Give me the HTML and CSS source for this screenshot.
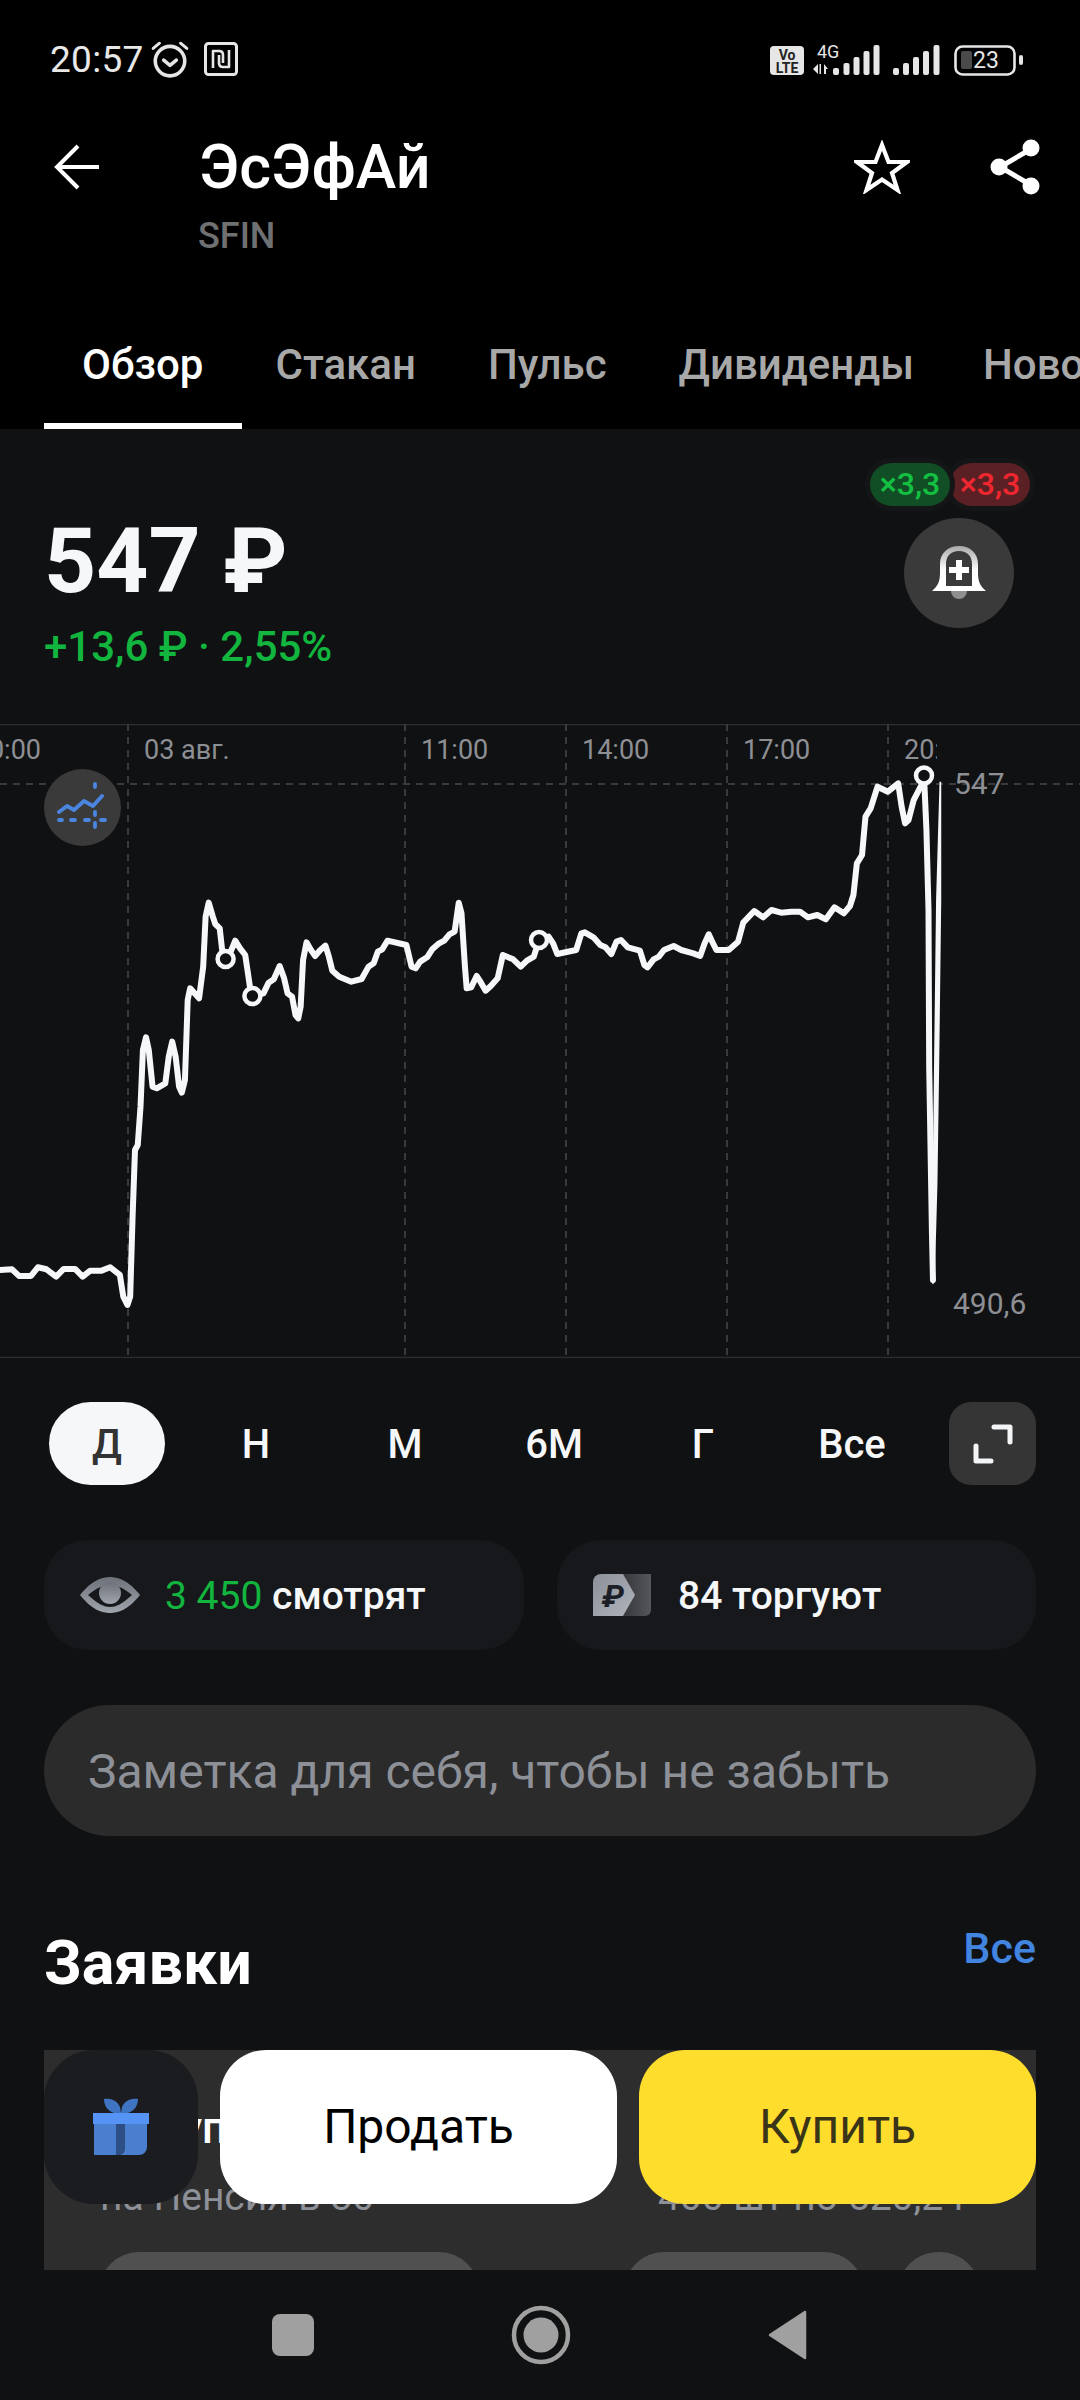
FILE: index.html
```html
<!DOCTYPE html>
<html lang="ru">
<head>
<meta charset="utf-8">
<title>ЭсЭфАй</title>
<link rel="stylesheet" href="styles.css">
</head>
<body>
<div class="screen">
  <header class="header">
    <div class="status">
      <div class="status-left">
        <span class="clock">20:57</span>
        <svg class="ic-alarm" width="40" height="40" viewBox="0 0 38 38" fill="none" stroke="#e6e6e6" stroke-linecap="round"><circle cx="19" cy="21" r="14" stroke-width="3.4"/><path d="M13 20l6 5 6-5" stroke-width="3.4" stroke-linejoin="round"/><path d="M3 9l6-5M35 9l-6-5" stroke-width="2.8"/></svg>
        <svg class="ic-nfc" width="34" height="34" viewBox="0 0 34 34" fill="none" stroke="#e6e6e6" stroke-linejoin="round"><rect x="1.5" y="1.5" width="31" height="31" rx="3" stroke-width="3"/><path d="M9 26V9h6c3 0 4 2 4 4v8" stroke-width="2.6"/><path d="M25 8v17h-6c-3 0-4-2-4-4v-8" stroke-width="2.6"/></svg>
      </div>
      <svg class="status-right" width="255" height="36" viewBox="770 40 255 36">
        <rect x="770" y="45" width="34" height="29" rx="4" fill="#e6e6e6"/>
        <text class="lte" x="787" y="58.500" text-anchor="middle">Vo</text>
        <text class="lte" x="787" y="71.500" text-anchor="middle">LTE</text>
        <text class="sig-text" x="817" y="57">4G</text>
        <path d="M818 63v10l-5-5zM821 63v10h-1.500v-10zM824 63l4 5h-2v5h-2z" fill="#e6e6e6"/>
        <g fill="#e6e6e6">
          <rect x="833" y="67" width="6" height="7" rx="2"/><rect x="843.500" y="62" width="6" height="12" rx="2"/><rect x="853.500" y="56" width="6" height="18" rx="2"/><rect x="863.500" y="50" width="6" height="24" rx="2"/><rect x="873.500" y="44" width="6" height="30" rx="2"/>
          <rect x="893" y="67" width="6" height="7" rx="2"/><rect x="903" y="62" width="6" height="12" rx="2"/><rect x="913" y="56" width="6" height="18" rx="2"/><rect x="923" y="50" width="6" height="24" rx="2"/><rect x="933.500" y="44" width="6" height="30" rx="2"/>
        </g>
        <rect x="955.500" y="45.500" width="59" height="28" rx="7" fill="none" stroke="#e6e6e6" stroke-width="2.600"/>
        <rect x="961" y="50" width="11" height="18" rx="2" fill="#4a4a4a"/>
        <text class="batt" x="973" y="67">23</text>
        <rect x="1019" y="54" width="4" height="10" rx="2" fill="#e6e6e6"/>
      </svg>
    </div>
    <div class="titlebar">
      <svg class="ic-back" width="46" height="46" viewBox="0 0 46 46" fill="none" stroke="#fff" stroke-width="4"><path d="M45 23H3M24 2L3 23l21 21"/></svg>
      <h1 class="title">ЭсЭфАй</h1>
      <svg class="ic-star" width="56" height="54" viewBox="0 0 56 54" fill="none" stroke="#fff" stroke-width="4.200"><path d="M28 5l6.500 17H53L38 33l5.500 17L28 39.500 12.500 50 18 33 3 22h18.500z"/></svg>
      <svg class="ic-share" width="52" height="58" viewBox="0 0 52 58" fill="#fff" stroke="#fff"><path d="M41 11L10 29l31 18" fill="none" stroke-width="5"/><circle cx="41" cy="10" r="8.500" stroke="none"/><circle cx="9" cy="29" r="8.500" stroke="none"/><circle cx="41" cy="48" r="8.500" stroke="none"/></svg>
    </div>
    <div class="ticker">SFIN</div>
    <nav class="tabs">
      <span class="tab tab-active">Обзор</span>
      <span class="tab">Стакан</span>
      <span class="tab">Пульс</span>
      <span class="tab">Дивиденды</span>
      <span class="tab tab-last">Новости</span>
    </nav>
  </header>

  <main class="main">
    <section class="quote">
      <div class="quote-left">
        <div class="price">547 ₽</div>
        <div class="change">+13,6 ₽ · 2,55%</div>
      </div>
      <div class="quote-right">
        <div class="badges">
          <span class="badge badge-red">×3,3</span>
          <span class="badge badge-green">×3,3</span>
        </div>
        <button class="bell">
          <svg width="56" height="56" viewBox="0 0 56 56">
            <defs><linearGradient id="bellGrad" x1="0" y1="0" x2="0" y2="1"><stop offset="0" stop-color="#a9a9a9"/><stop offset=".55" stop-color="#fff"/></linearGradient></defs>
            <path d="M20 46h16a8 8 0 0 1-16 0z" fill="#8f8f8f"/>
            <path d="M1 46c6-5 8-10 8-18V19C9 8 17 1 28 1s19 7 19 18v9c0 8 2 13 8 18zM15 41h26V19c0-8-5-13-13-13S15 11 15 19z" fill="url(#bellGrad)" fill-rule="evenodd"/>
            <path d="M25 15h6v7h7v6h-7v7h-6v-7h-7v-6h7z" fill="#fff"/>
          </svg>
        </button>
      </div>
    </section>

    <section class="chart">
      <svg class="chart-svg" width="1080" height="634" viewBox="0 724 1080 634">
        <defs><clipPath id="lastLabel"><rect x="890" y="724" width="47" height="50"/></clipPath></defs>
        <path class="rule" d="M0 724.500H1080M0 1357.500H1080"/>
        <path class="grid" d="M0 784H1080M128 724V1357M405 724V1357M566 724V1357M727 724V1357M888 724V1357"/>
        <text class="axis" x="41" y="759" text-anchor="end">20:00</text>
        <text class="axis" x="144" y="759">03 авг.</text>
        <text class="axis" x="421" y="759">11:00</text>
        <text class="axis" x="582" y="759">14:00</text>
        <text class="axis" x="743" y="759">17:00</text>
        <text class="axis" x="904" y="759" clip-path="url(#lastLabel)">20:00</text>
        <text class="axis-price" x="954" y="794">547</text>
        <text class="axis-price" x="953" y="1314">490,6</text>
        <g transform="translate(0 900) scale(.3444 .3333)">
          <path class="line" d="M0 1110L35 1108 55 1128 90 1128 110 1102 135 1108 163 1130 185 1107 218 1107 240 1130 262 1112 295 1112 320 1102 348 1125 358 1190 370 1215 378 1190 385 950 392 750 400 735 408 620 415 450 424 412 432 450 443 560 455 565 480 550 490 470 500 425 510 470 520 560 528 578 537 540 545 300 552 265 578 295 590 200 597 50 606 8 618 50 625 72 638 85 645 150 655 177 672 150 683 122 697 145 712 165 720 220 727 270 733 288 765 280 780 248 795 238 812 198 825 235 835 280 848 290 858 345 866 355 873 320 880 180 890 127 903 150 915 168 930 150 945 137 955 170 965 212 985 230 1020 245 1050 237 1070 200 1085 190 1097 155 1110 148 1125 122 1180 135 1195 200 1207 205 1220 185 1240 172 1255 148 1275 130 1290 122 1305 103 1320 95 1332 8 1340 40 1350 200 1355 265 1368 262 1384 228 1395 245 1410 272 1425 258 1445 235 1460 165 1490 178 1512 200 1530 182 1550 170 1565 120 1593 110 1606 130 1618 162 1673 150 1688 100 1698 97 1723 112 1743 135 1758 142 1775 162 1790 125 1803 120 1823 142 1858 152 1871 195 1880 202 1898 178 1913 170 1928 150 1956 138 1978 150 2013 160 2033 168 2046 130 2058 103 2068 125 2080 150 2116 150 2143 125 2158 68 2190 33 2216 52 2240 30 2268 38 2298 35 2323 35 2346 52 2373 45 2398 58 2423 22 2450 40 2468 18 2478 -15 2488 -110 2503 -135 2513 -250 2528 -275 2548 -340 2578 -325 2608 -350 2618 -280 2628 -230 2638 -240 2653 -300 2678 -350 2683 -373"/>
          <path class="line" d="M2683 -373L2690 -210 2696 30 2698 500 2706 1000 2709 1140"/>
          <path class="spike" d="M2728 -355L2733 -355 2733 0 2727 500 2722 850 2718 1000 2714 1140Q2709 1165 2704 1140L2700 1000 2708 850 2712 500 2718 0z"/>
        </g>
        <circle class="dot" cx="225.600" cy="959" r="8"/>
        <circle class="dot" cx="252.400" cy="996" r="8"/>
        <circle class="dot" cx="539" cy="940" r="8"/>
        <circle class="dot" cx="924" cy="775.500" r="8"/>
      </svg>
      <button class="indicator">
        <svg width="52" height="52" viewBox="0 0 52 52" fill="none" stroke="#4a86e0" stroke-linecap="round">
          <path d="M2 30l8-6 7 4 10-9 9 5 9-10" stroke-width="3.800" stroke-linejoin="round"/>
          <path d="M38 2v3M38 30v3M38 41v4M2 38h3M14 38h4M28 38h4M44 38h4" stroke-width="3.800"/>
        </svg>
      </button>
    </section>

    <div class="ranges">
      <span class="range range-active">Д</span>
      <span class="range">Н</span>
      <span class="range">М</span>
      <span class="range">6М</span>
      <span class="range">Г</span>
      <span class="range">Все</span>
      <button class="expand">
        <svg width="42" height="42" viewBox="0 0 42 42" fill="none" stroke="#f4f5f6" stroke-width="5" stroke-linecap="round" stroke-linejoin="round"><path d="M22 4h16v15M4 23v15h15"/></svg>
      </button>
    </div>

    <div class="stats">
      <div class="stat">
        <svg class="stat-ic" width="60" height="36" viewBox="0 0 60 36">
          <defs><linearGradient id="eyeGrad" x1="0" y1="0" x2="0" y2="1"><stop offset="0" stop-color="#6d727a"/><stop offset="1" stop-color="#a0a5ad"/></linearGradient></defs>
          <path d="M0 18C12 3 22 0 30 0s18 3 30 18C48 33 38 36 30 36S12 33 0 18z" fill="url(#eyeGrad)"/>
          <path d="M8 18C18 10 24 8 30 8s12 2 22 10C42 27 36 30 30 30S18 27 8 18z" fill="#17181b"/>
          <circle cx="30" cy="16" r="11" fill="url(#eyeGrad)"/>
        </svg>
        <span class="stat-text"><span class="stat-num">3 450</span> смотрят</span>
      </div>
      <div class="stat">
        <svg class="stat-ic stat-ic-wide" width="58" height="42" viewBox="0 0 58 42">
          <defs><linearGradient id="tagGrad" x1="0" y1="0" x2="1" y2="1"><stop offset="0" stop-color="#8b9099"/><stop offset="1" stop-color="#b0b4bb"/></linearGradient><linearGradient id="tagBack" x1="0" y1="0" x2="1" y2="0"><stop offset="0" stop-color="#2c2d30"/><stop offset="1" stop-color="#55565a"/></linearGradient></defs>
          <path d="M20 0h38v36a6 6 0 0 1-6 6H20z" fill="url(#tagBack)"/>
          <path d="M8 0h22l12 21-12 21H0V8a8 8 0 0 1 8-8z" fill="url(#tagGrad)"/>
          <text class="tag-rub" x="20" y="33" text-anchor="middle">₽</text>
        </svg>
        <span class="stat-text">84 торгуют</span>
      </div>
    </div>

    <div class="note">Заметка для себя, чтобы не забыть</div>

    <div class="section-head">
      <h2 class="section-title">Заявки</h2>
      <a class="section-link">Все</a>
    </div>

    <section class="order">
      <div class="order-title">Покупка</div>
      <div class="order-row">
        <span>на Пенсия в 80</span>
        <span>400 шт по 520,24</span>
      </div>
      <div class="order-actions">
        <span class="order-btn order-btn-a"></span>
        <span class="order-btn order-btn-b"></span>
        <span class="order-btn order-btn-c"></span>
      </div>
    </section>

    <div class="actions">
      <button class="gift">
        <svg width="58" height="58" viewBox="0 0 58 58">
          <path d="M12 1c6-1 13 1 16 8l1 6H22C16 13 12 8 12 1zM46 1c-6-1-13 1-16 8l-1 6h7C42 13 46 8 46 1z" fill="#3f74c2"/>
          <rect x="1" y="15" width="56" height="11" fill="#5594f5"/>
          <path d="M2 26h53v23a8 8 0 0 1-8 8H2z" fill="#4a7fd0"/>
          <path d="M24 26h9v25a6 6 0 0 1-6 6h-3z" fill="#2d4f86"/>
        </svg>
      </button>
      <button class="trade trade-sell">Продать</button>
      <button class="trade trade-buy">Купить</button>
    </div>
  </main>

  <footer class="navbar">
    <span class="nav-square"></span>
    <svg width="60" height="60" viewBox="0 0 60 60"><circle cx="30" cy="30" r="27" fill="none" stroke="#a0a0a0" stroke-width="4.500"/><circle cx="30" cy="30" r="17.500" fill="#a0a0a0"/></svg>
    <svg width="40" height="50" viewBox="0 0 40 50"><path d="M37 2L2 25l35 23z" fill="#a0a0a0" stroke="#a0a0a0" stroke-width="2.500" stroke-linejoin="round"/></svg>
  </footer>
</div>
</body>
</html>
```
FILE: styles.css
```css
* { box-sizing: border-box; }
html, body { margin: 0; padding: 0; background: #000; }
body { font-family: Roboto, "Liberation Sans", sans-serif; color: #fff; }
button { font: inherit; border: 0; padding: 0; }
.screen { width: 1080px; height: 2400px; display: flex; flex-direction: column; overflow: hidden; background: #101112; }

/* header */
.header { height: 429px; flex: none; background: #000; display: flex; flex-direction: column; }
.status { height: 118px; padding: 0 55px 0 50px; display: flex; align-items: center; justify-content: space-between; flex: none; }
.status-left { display: flex; align-items: center; }
.clock { font-size: 37px; color: #e8e8e8; width: 100px; letter-spacing: .3px; }
.ic-nfc { margin-left: 14px; }
.lte { font: 700 14px Roboto, sans-serif; fill: #222; }
.sig-text { font: 400 18px Roboto, sans-serif; fill: #e6e6e6; }
.batt { font: 400 23px Roboto, sans-serif; fill: #e6e6e6; }
.titlebar { height: 70px; margin-top: 14px; display: flex; align-items: center; padding: 0 38px 0 54px; flex: none; }
.title { margin: 0 0 0 99px; font-size: 61px; line-height: 70px; font-weight: 500; }
.ic-star { margin-left: auto; }
.ic-share { margin-left: 80px; }
.ticker { margin: 12px 0 0 198px; font-size: 36px; line-height: 44px; font-weight: 500; color: #6f7072; }
.tabs { margin-top: auto; height: 110px; display: flex; padding-left: 44px; overflow: hidden; flex: none; }
.tab { padding: 22px 36px 0; font-size: 42px; line-height: 47px; font-weight: 500; color: #a8a8a8; white-space: nowrap; }
.tab-active { color: #fff; border-bottom: 6px solid #fff; margin-right: -3px; padding: 22px 39px 0 38px; }
.tab-last { margin-left: -3px; }

/* main */
.main { flex: 1; min-height: 0; position: relative; overflow: hidden; }
.quote { height: 295px; display: flex; justify-content: space-between; padding: 0 50px 0 44px; }
.quote-left { padding-top: 82px; }
.price { font-size: 91px; line-height: 100px; font-weight: 700; color: #f6f7f8; }
.change { margin-top: 14px; font-size: 42px; line-height: 44px; font-weight: 500; color: #12b53d; white-space: nowrap; }
.quote-right { padding-top: 34px; width: 160px; display: flex; flex-direction: column; }
.badges { display: flex; flex-direction: row-reverse; height: 43px; }
.badge { width: 80px; height: 43px; border-radius: 22px; font-size: 32px; line-height: 43px; text-align: center; font-weight: 500; box-shadow: 0 0 0 5px #141516; }
.badge-green { background: #114d25; color: #14c042; position: relative; }
.badge-red { background: #5a2024; color: #f0272f; }
.bell { margin: 12px 16px 0 0; align-self: flex-end; width: 110px; height: 110px; border-radius: 50%; background: #3a3a3b; display: flex; align-items: center; justify-content: center; }

/* chart */
.chart { height: 634px; position: relative; }
.chart-svg { display: block; }
.rule { stroke: #2f2f31; stroke-width: 1.500; fill: none; }
.grid { stroke: #3a3a3c; stroke-width: 2; stroke-dasharray: 7 6; fill: none; }
.axis { font: 400 27px Roboto, sans-serif; fill: #8d8f95; }
.axis-price { font: 400 30px Roboto, sans-serif; fill: #8d8f95; }
.line { fill: none; stroke: #f6f7f8; stroke-width: 6px; stroke-linejoin: round; stroke-linecap: round; vector-effect: non-scaling-stroke; }
.spike { fill: #f6f7f8; }
.dot { fill: #101112; stroke: #f6f7f8; stroke-width: 4.500; }
.indicator { position: absolute; left: 44px; top: 45px; width: 77px; height: 77px; border-radius: 50%; background: #3a3a3b; display: flex; align-items: center; justify-content: center; }

/* ranges */
.ranges { margin-top: 44px; height: 83px; display: flex; align-items: center; gap: 33px; padding-left: 49px; }
.range { width: 116px; height: 83px; border-radius: 42px; font-size: 40px; line-height: 85px; font-weight: 500; text-align: center; color: #f6f7f8; }
.range-active { background: #f6f7f8; color: #333; }
.expand { margin-left: 6px; width: 87px; height: 83px; border-radius: 22px; background: #353536; display: flex; align-items: center; justify-content: center; }

/* stats */
.stats { margin: 55px 44px 0; display: grid; grid-template-columns: 480px 479px; gap: 33px; }
.stat { height: 110px; border-radius: 44px; background: #17181b; display: flex; align-items: center; padding-left: 36px; padding-top: 2px; }
.stat-ic { flex: none; margin-right: 25px; margin-top: -2px; }
.stat-ic-wide { margin-right: 27px; }
.stat-text { font-size: 39px; line-height: 44px; font-weight: 500; color: #f6f7f8; white-space: nowrap; }
.stat-num { color: #12b53d; font-weight: 400; }
.tag-rub { font: italic 700 32px Roboto, sans-serif; fill: #1d1f26; }

/* note */
.note { margin: 55px 44px 0; height: 131px; border-radius: 66px; background: #2b2b2c; padding-left: 44px; font-size: 48px; line-height: 133px; color: #8d9097; white-space: nowrap; }

/* section */
.section-head { margin: 92px 44px 0; height: 70px; display: flex; justify-content: space-between; }
.section-title { margin: 0; font-size: 61px; line-height: 70px; font-weight: 700; }
.section-link { margin-top: -4px; font-size: 43px; line-height: 49px; font-weight: 500; color: #4285e0; }

/* order card */
.order { margin: 52px 44px 0; padding: 52px 71px 0 56px; height: 300px; background: #2d2d2e; border-radius: 0; }
.order-title { font-size: 44px; line-height: 52px; font-weight: 500; }
.order-row { margin-top: 21px; display: flex; justify-content: space-between; font-size: 39px; line-height: 44px; color: #8d9097; }
.order-actions { margin: 33px 0 0 -1px; display: flex; }
.order-btn { height: 80px; border-radius: 40px; background: #505051; flex: none; }
.order-btn-a { width: 380px; }
.order-btn-b { width: 240px; margin-left: 145px; }
.order-btn-c { width: 82px; margin-left: 34px; }

/* bottom actions */
.actions { position: absolute; left: 44px; right: 44px; bottom: 66px; height: 154px; display: flex; gap: 22px; }
.gift { width: 154px; flex: none; border-radius: 50px; background: #1b1c1f; display: flex; align-items: center; justify-content: center; }
.trade { flex: 1; border-radius: 46px; font-size: 48px; color: #000; padding-bottom: 2px; }
.trade-sell { background: #fff; }
.trade-buy { background: #ffdd2d; color: #3a3418; }

/* navbar */
.navbar { height: 130px; flex: none; display: flex; align-items: center; justify-content: center; gap: 197px; background: #101112; }
.nav-square { width: 42px; height: 42px; border-radius: 8px; background: #a0a0a0; }
```
